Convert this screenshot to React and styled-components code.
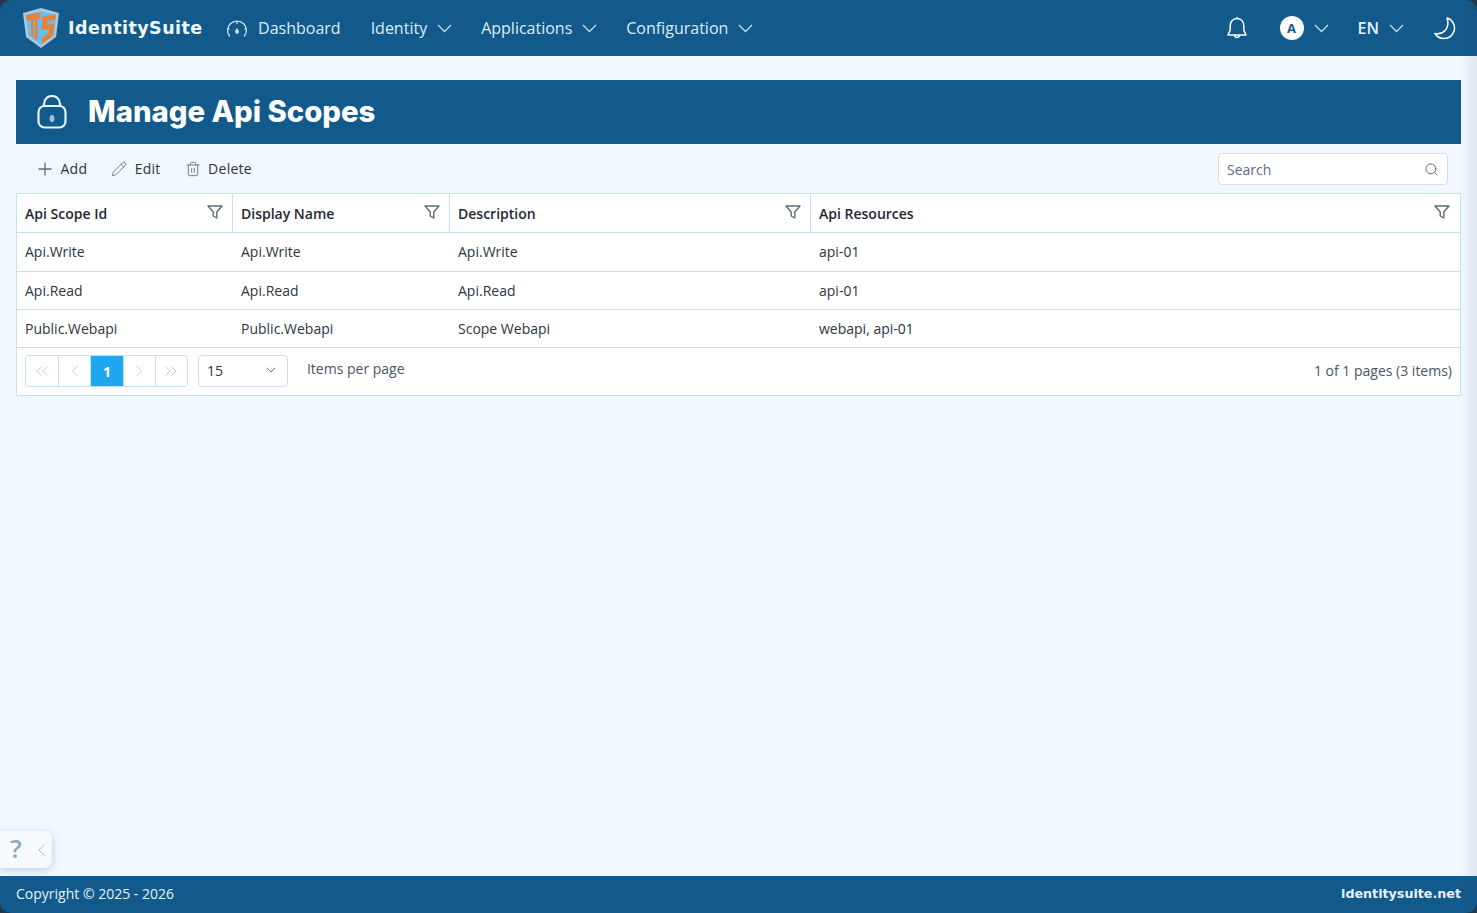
import styled, { createGlobalStyle } from 'styled-components';
import {
  ChevronDown,
  ChevronLeft,
  ChevronRight,
  ChevronsLeft,
  ChevronsRight,
  Pencil,
  Search,
  Trash2,
} from 'lucide-react';

const columns = [
  { title: 'Api Scope Id', width: '215px' },
  { title: 'Display Name', width: '217px' },
  { title: 'Description', width: '361px' },
  { title: 'Api Resources', width: '1fr' },
];

const rows = [
  ['Api.Write', 'Api.Write', 'Api.Write', 'api-01'],
  ['Api.Read', 'Api.Read', 'Api.Read', 'api-01'],
  ['Public.Webapi', 'Public.Webapi', 'Scope Webapi', 'webapi, api-01'],
];

const gridColumns = columns.map((c) => c.width).join(' ');

const Logo = () => (
  <svg width="38" height="42" viewBox="0 0 38 42">
    <path d="M19 1 L37 6 L34 30 L19 41 L4 30 L1 6 Z" fill="#a9cade" />
    <path d="M19 4 L34 8 L31.5 28.5 L19 38 L6.5 28.5 L4 8 Z" fill="#6bbcec" />
    <path d="M4 8 L18.5 5.5 L18.5 11.5 L15.5 12 L15.5 33 L9 28.5 L9 12.8 L4.6 13.6 Z" fill="#e8813a" />
    <path d="M11.6 13 H13 V30 L11.6 29 Z" fill="#6bbcec" />
    <path d="M20 10 L34 7.5 L33.2 13 L25 14 L25 17.5 L32.5 17 L31 29 L20 37 L20 31 L26.5 26.5 L27 22.5 L20 23 Z" fill="#e8813a" />
  </svg>
);

const GaugeIcon = () => (
  <svg width="22" height="18" viewBox="0 0 22 18" fill="none" stroke="#c6deee" strokeWidth="1.3" strokeLinecap="round">
    <path d="M3.5 16 A9.5 9.5 0 0 1 4 4 A10 10 0 0 1 18 4 A9.5 9.5 0 0 1 18.5 16" />
    <path d="M11 2 V3.5 M3 9 H1.6 M19 9 H20.4" />
    <path d="M11 8 C12.4 10 13 10.8 13 11.8 A2 2 0 0 1 9 11.8 C9 10.8 9.6 10 11 8 Z" fill="#c6deee" stroke="none" />
  </svg>
);

const NavChevron = () => (
  <svg width="15" height="9" viewBox="0 0 15 9" fill="none" stroke="#c6deee" strokeWidth="1.3">
    <path d="M1 1 L7.5 7.5 L14 1" />
  </svg>
);

const BellIcon = () => (
  <svg width="24" height="24" viewBox="0 0 24 24" fill="none" stroke="#fff" strokeWidth="1.5" strokeLinejoin="round">
    <path d="M12 2.5 C7.5 2.5 5.2 6 5.2 10 V13.5 C5.2 16 3.2 17 3 19 H21 C20.8 17 18.8 16 18.8 13.5 V10 C18.8 6 16.5 2.5 12 2.5 Z" />
    <path d="M9.6 19 A2.4 2.4 0 0 0 14.4 19" />
    <path d="M12 1 V2.5" />
  </svg>
);

const MoonIcon = () => (
  <svg width="24" height="24" viewBox="0 0 24 24" fill="none" stroke="#fff" strokeWidth="1.5" strokeLinejoin="round">
    <path d="M14 2 A10.5 10.5 0 1 1 2 17.5 C9.5 19 17.5 13 14 2 Z" />
  </svg>
);

const LockIcon = () => (
  <svg width="30" height="34" viewBox="0 0 30 34" fill="none" stroke="#e8f3fb" strokeWidth="2.2">
    <rect x="1.5" y="11" width="27" height="21.5" rx="6" />
    <path d="M7 11 V9 A8 8 0 0 1 23 9 V11" />
    <ellipse cx="15" cy="23.5" rx="2.4" ry="3.4" fill="#9fc0d8" stroke="none" />
  </svg>
);

const PlusIcon = () => (
  <svg width="16" height="16" viewBox="0 0 16 16" fill="none" stroke="#5f6c7b" strokeWidth="1.3">
    <path d="M8 1.5 V14.5 M1.5 8 H14.5" />
  </svg>
);

const FunnelIcon = () => (
  <svg width="16" height="14" viewBox="0 0 16 14" fill="none" stroke="#5f6c7b" strokeWidth="1.4" strokeLinejoin="round">
    <path d="M1 1 H15 L9.8 7 V13 L6.2 11 V7 Z" />
  </svg>
);

const App = () => (
  <Page>
    <GlobalStyle />
    <Header>
      <Brand>
        <Logo />
        <BrandName>IdentitySuite</BrandName>
      </Brand>
      <NavItem $first>
        <GaugeIcon />
        <span>Dashboard</span>
      </NavItem>
      <NavItem>
        <span>Identity</span>
        <NavChevron />
      </NavItem>
      <NavItem>
        <span>Applications</span>
        <NavChevron />
      </NavItem>
      <NavItem>
        <span>Configuration</span>
        <NavChevron />
      </NavItem>
      <HeaderRight>
        <BellIcon />
        <UserMenu>
          <Avatar>A</Avatar>
          <NavChevron />
        </UserMenu>
        <LangMenu>
          <b>EN</b>
          <NavChevron />
        </LangMenu>
        <MoonIcon />
      </HeaderRight>
    </Header>

    <Main>
      <TitleBar>
        <LockIcon />
        <Title>Manage Api Scopes</Title>
      </TitleBar>
      <Toolbar>
        <ToolButton>
          <PlusIcon />
          <span>Add</span>
        </ToolButton>
        <ToolButton>
          <Pencil size={16} strokeWidth={1.3} />
          <span>Edit</span>
        </ToolButton>
        <ToolButton>
          <Trash2 size={16} strokeWidth={1.3} />
          <span>Delete</span>
        </ToolButton>
        <SearchBox>
          <span>Search</span>
          <Search size={15} strokeWidth={1.6} />
        </SearchBox>
      </Toolbar>
      <Grid>
        <HeadRow>
          {columns.map((col) => (
            <HeadCell key={col.title}>
              {col.title}
              <FunnelIcon />
            </HeadCell>
          ))}
        </HeadRow>
        {rows.map((row, i) => (
          <BodyRow key={i} $tall={i === 0}>
            {row.map((value, j) => (
              <BodyCell key={j}>{value}</BodyCell>
            ))}
          </BodyRow>
        ))}
        <Pager>
          <PageButtons>
            <PageButton><ChevronsLeft size={20} strokeWidth={1.2} /></PageButton>
            <PageButton><ChevronLeft size={20} strokeWidth={1.2} /></PageButton>
            <PageButton $active>1</PageButton>
            <PageButton><ChevronRight size={20} strokeWidth={1.2} /></PageButton>
            <PageButton><ChevronsRight size={20} strokeWidth={1.2} /></PageButton>
          </PageButtons>
          <PageSize>
            <span>15</span>
            <ChevronDown size={16} strokeWidth={1.4} />
          </PageSize>
          <PerPage>Items per page</PerPage>
          <PageInfo>1 of 1 pages (3 items)</PageInfo>
        </Pager>
      </Grid>
    </Main>

    <HelpTab>
      <span>?</span>
      <ChevronLeft size={22} strokeWidth={1} />
    </HelpTab>

    <Footer>
      <span>Copyright © 2025 - 2026</span>
      <FooterBrand>identitysuite.net</FooterBrand>
    </Footer>
    <WindowEdge />
  </Page>
);

const GlobalStyle = createGlobalStyle`
  html, body {
    margin: 0;
    height: 100%;
    overflow: hidden;
  }
  body {
    font-family: "Open Sans", "Noto Sans", sans-serif;
    font-size: 14px;
    color: #2d3540;
    background: #f2f8ff;
  }
  #root {
    height: 100%;
  }
`;

const Page = styled.div`
  position: relative;
  height: 100%;
  display: flex;
  flex-direction: column;
  overflow: hidden;
`;

const Header = styled.header`
  height: 56px;
  flex: none;
  display: flex;
  align-items: center;
  padding: 0 20px 0 22px;
  background: #125a8c;
  color: #e6f2fa;
`;

const Brand = styled.div`
  display: flex;
  align-items: center;
  gap: 8px;
`;

const BrandName = styled.span`
  font-family: "DejaVu Sans", sans-serif;
  font-size: 17.5px;
  font-weight: 700;
  letter-spacing: 0.45px;
  color: #eef7fc;
`;

const NavItem = styled.div`
  display: flex;
  align-items: center;
  gap: 10px;
  margin-left: ${(p) => (p.$first ? '23.4px' : '29px')};
  margin-right: ${(p) => (p.$first ? '1px' : '0')};
  font-size: 16px;
  color: #dcecf6;

  svg {
    margin-top: 1px;
  }
`;

const HeaderRight = styled.div`
  margin-left: auto;
  display: flex;
  align-items: center;
`;

const UserMenu = styled.div`
  display: flex;
  align-items: center;
  gap: 10px;
  margin-left: 31px;
`;

const Avatar = styled.div`
  width: 24px;
  height: 24px;
  border-radius: 50%;
  display: flex;
  align-items: center;
  justify-content: center;
  background: #fff;
  color: #125a8c;
  font-size: 13px;
  font-weight: 700;
`;

const LangMenu = styled.div`
  display: flex;
  align-items: center;
  gap: 10px;
  margin: 0 29px;
  font-size: 16px;
  color: #e6f2fa;

  b {
    font-weight: 600;
  }
`;

const Main = styled.main`
  flex: 1;
  padding: 24px 16px 0;
`;

const TitleBar = styled.div`
  height: 64px;
  display: flex;
  align-items: center;
  gap: 21px;
  padding-left: 21px;
  background: #125a8c;
`;

const Title = styled.h1`
  margin: -1px 0 0;
  font-family: Inter, "Noto Sans", sans-serif;
  font-size: 29.3px;
  font-weight: 800;
  color: #fff;
`;

const Toolbar = styled.div`
  height: 49px;
  display: flex;
  align-items: center;
  gap: 24px;
  padding: 0 13px 0 21px;
`;

const ToolButton = styled.div`
  display: flex;
  align-items: center;
  gap: 7.5px;
  letter-spacing: 0.25px;
  color: #2d3540;

  svg {
    color: #5f6c7b;
  }
`;

const SearchBox = styled.div`
  box-sizing: border-box;
  margin-left: auto;
  width: 230px;
  height: 32px;
  display: flex;
  align-items: center;
  justify-content: space-between;
  padding: 2px 8px 0;
  background: #fff;
  border: 1px solid #d5dce4;
  border-radius: 4px;
  color: #5f6c7b;
`;

const Grid = styled.div`
  background: #fff;
  border: 1px solid #c5e3ef;
`;

const HeadRow = styled.div`
  box-sizing: border-box;
  display: grid;
  grid-template-columns: ${gridColumns};
  height: 39px;
  border-bottom: 1px solid #c5e3ef;
`;

const HeadCell = styled.div`
  display: flex;
  align-items: center;
  justify-content: space-between;
  padding: 0 9px 0 8px;
  font-weight: 600;
  color: #1f2933;

  & + & {
    border-left: 1px solid #c5e3ef;
  }

  &:last-child {
    padding-right: 10px;
  }

  svg {
    margin-top: -2px;
  }
`;

const BodyRow = styled.div`
  box-sizing: border-box;
  display: grid;
  grid-template-columns: ${gridColumns};
  height: ${(p) => (p.$tall ? '39px' : '38px')};
  padding-bottom: ${(p) => (p.$tall ? '1px' : '0')};
  border-bottom: 1px solid #c5e3ef;
`;

const BodyCell = styled.div`
  display: flex;
  align-items: center;
  padding: 0 8px;

  & + & {
    padding-left: 9px;
  }
`;

const Pager = styled.div`
  box-sizing: border-box;
  height: 47px;
  display: flex;
  align-items: center;
  padding: 0 8px 2px;
`;

const PageButtons = styled.div`
  display: flex;
  height: 30px;
  margin-top: 1px;
  border: 1px solid #c5e3ef;
  border-radius: 3px;
  overflow: hidden;
`;

const PageButton = styled.div`
  box-sizing: border-box;
  width: 32.2px;
  display: flex;
  align-items: center;
  justify-content: center;
  font-weight: 700;
  color: ${(p) => (p.$active ? '#fff' : '#c1cbd6')};
  background: ${(p) => (p.$active ? '#1ea7f0' : '#fff')};

  & + & {
    border-left: 1px solid #c5e3ef;
  }
`;

const PageSize = styled.div`
  box-sizing: border-box;
  width: 90px;
  height: 32px;
  margin-left: 10px;
  display: flex;
  align-items: center;
  justify-content: space-between;
  padding: 0 8px 1px;
  border: 1px solid #d5dce4;
  border-radius: 4px;

  svg {
    color: #5f6c7b;
  }
`;

const PerPage = styled.span`
  margin: -5px 0 0 19px;
  color: #4a5563;
`;

const PageInfo = styled.span`
  margin: -1px 0 0 auto;
  color: #4a5563;
`;

const HelpTab = styled.div`
  position: absolute;
  left: 0;
  bottom: 45px;
  width: 52px;
  height: 37px;
  display: flex;
  align-items: center;
  gap: 9px;
  padding-left: 10px;
  box-sizing: border-box;
  background: #f6faff;
  border-radius: 0 8px 8px 0;
  box-shadow: 0 2px 9px rgba(90, 130, 170, 0.35);
  color: #9bb3c9;

  span {
    margin-top: -4px;
    font-size: 26px;
    font-weight: 600;
    color: #8fa9c2;
  }
`;

const Footer = styled.footer`
  box-sizing: border-box;
  height: 37px;
  flex: none;
  display: flex;
  align-items: center;
  justify-content: space-between;
  padding: 0 16px 2px;
  background: #125a8c;
  color: #e6f2fa;
`;

const FooterBrand = styled.span`
  font-family: "DejaVu Sans", sans-serif;
  font-size: 12.7px;
  font-weight: 700;
  color: #e6f2fa;
`;

const cornerColor = 'rgba(38, 50, 62, 0.85)';

const WindowEdge = styled.div`
  position: absolute;
  inset: 0;
  pointer-events: none;
  background:
    radial-gradient(circle at 100% 100%, transparent 9px, ${cornerColor} 10px) top left / 10px 10px no-repeat,
    radial-gradient(circle at 0 100%, transparent 9px, ${cornerColor} 10px) top right / 10px 10px no-repeat,
    radial-gradient(circle at 100% 0, transparent 9px, ${cornerColor} 10px) bottom left / 10px 10px no-repeat,
    radial-gradient(circle at 0 0, transparent 9px, ${cornerColor} 10px) bottom right / 10px 10px no-repeat,
    linear-gradient(to right, rgba(40, 60, 80, 0), rgba(40, 60, 80, 0.1)) right / 16px 100% no-repeat;
`;

export default App;
